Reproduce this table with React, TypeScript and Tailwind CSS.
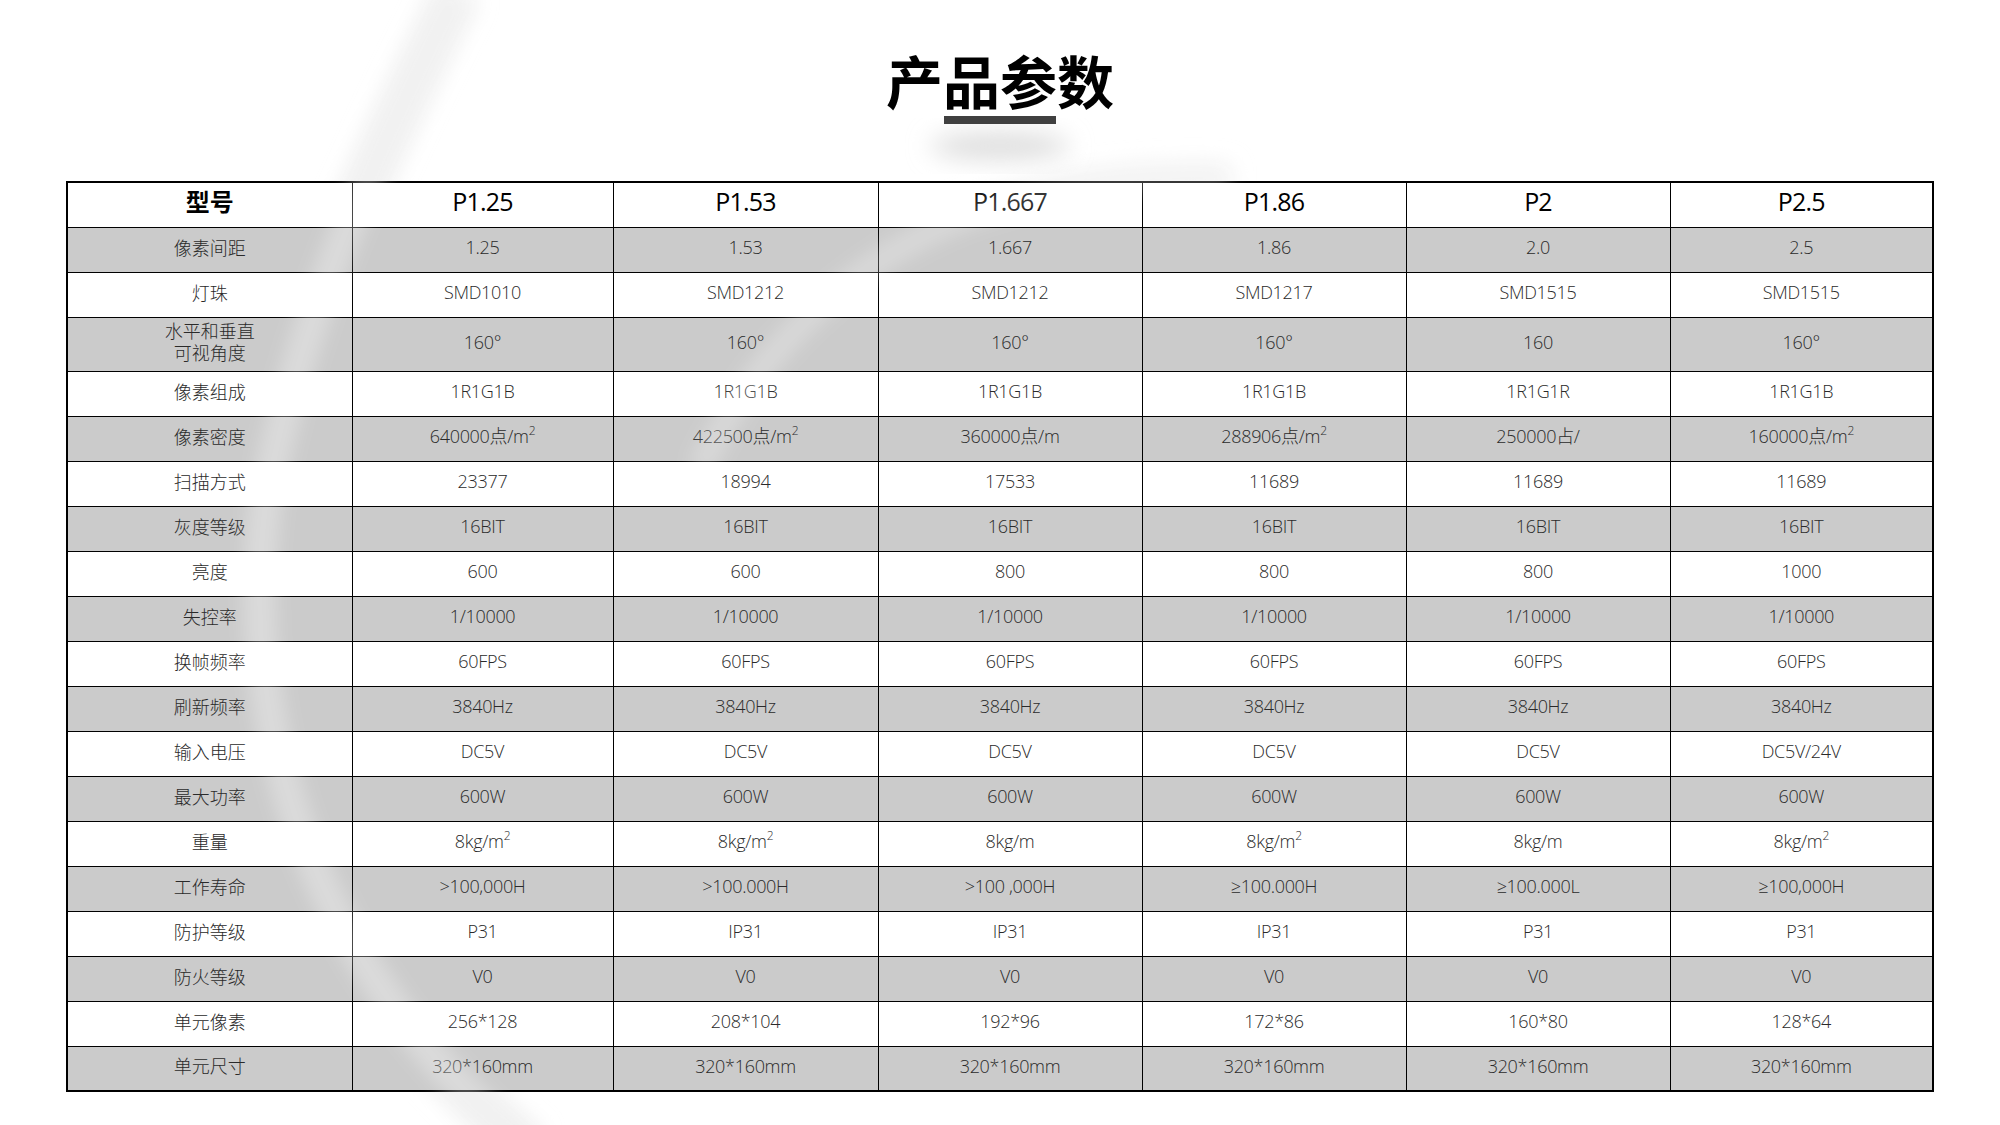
const models = ["P1.25", "P1.53", "P1.667", "P1.86", "P2", "P2.5"];

type Cell = string | { base: string; sup: string };

const sq = (base: string): Cell => ({ base, sup: "2" });

const rows: { label: string[]; values: Cell[]; tall?: boolean }[] = [
  { label: ["像素间距"], values: ["1.25", "1.53", "1.667", "1.86", "2.0", "2.5"] },
  { label: ["灯珠"], values: ["SMD1010", "SMD1212", "SMD1212", "SMD1217", "SMD1515", "SMD1515"] },
  { label: ["水平和垂直", "可视角度"], values: ["160°", "160°", "160°", "160°", "160", "160°"], tall: true },
  { label: ["像素组成"], values: ["1R1G1B", "1R1G1B", "1R1G1B", "1R1G1B", "1R1G1R", "1R1G1B"] },
  {
    label: ["像素密度"],
    values: [sq("640000点/m"), sq("422500点/m"), "360000点/m", sq("288906点/m"), "250000占/", sq("160000点/m")],
  },
  { label: ["扫描方式"], values: ["23377", "18994", "17533", "11689", "11689", "11689"] },
  { label: ["灰度等级"], values: ["16BIT", "16BIT", "16BIT", "16BIT", "16BIT", "16BIT"] },
  { label: ["亮度"], values: ["600", "600", "800", "800", "800", "1000"] },
  { label: ["失控率"], values: ["1/10000", "1/10000", "1/10000", "1/10000", "1/10000", "1/10000"] },
  { label: ["换帧频率"], values: ["60FPS", "60FPS", "60FPS", "60FPS", "60FPS", "60FPS"] },
  { label: ["刷新频率"], values: ["3840Hz", "3840Hz", "3840Hz", "3840Hz", "3840Hz", "3840Hz"] },
  { label: ["输入电压"], values: ["DC5V", "DC5V", "DC5V", "DC5V", "DC5V", "DC5V/24V"] },
  { label: ["最大功率"], values: ["600W", "600W", "600W", "600W", "600W", "600W"] },
  { label: ["重量"], values: [sq("8kg/m"), sq("8kg/m"), "8kg/m", sq("8kg/m"), "8kg/m", sq("8kg/m")] },
  {
    label: ["工作寿命"],
    values: [">100,000H", ">100.000H", ">100 ,000H", "≥100.000H", "≥100.000L", "≥100,000H"],
  },
  { label: ["防护等级"], values: ["P31", "IP31", "IP31", "IP31", "P31", "P31"] },
  { label: ["防火等级"], values: ["V0", "V0", "V0", "V0", "V0", "V0"] },
  { label: ["单元像素"], values: ["256*128", "208*104", "192*96", "172*86", "160*80", "128*64"] },
  { label: ["单元尺寸"], values: ["320*160mm", "320*160mm", "320*160mm", "320*160mm", "320*160mm", "320*160mm"] },
];

const CellText = ({ cell }: { cell: Cell }) =>
  typeof cell === "string" ? (
    <>{cell}</>
  ) : (
    <>
      {cell.base}
      <span className="relative -top-[8px] text-[12px]">{cell.sup}</span>
    </>
  );

const bigArc = "M 458 -10 C 395 120 300 300 266 500 C 240 700 290 950 530 1150";
const smallArc = "M 700 470 C 750 360 850 255 985 210 C 1065 185 1150 176 1230 180";

const App = () => {
  return (
    <div className="relative h-[1125px] w-[2000px] overflow-hidden bg-white font-['Open_Sans','Noto_Sans_CJK_SC',sans-serif]">
      {/* background swooshes */}
      <svg className="absolute inset-0" width="2000" height="1125" viewBox="0 0 2000 1125">
        <defs>
          <filter id="soft" x="-20%" y="-20%" width="140%" height="140%">
            <feGaussianBlur stdDeviation="11" />
          </filter>
          <filter id="softer" x="-50%" y="-50%" width="200%" height="200%">
            <feGaussianBlur stdDeviation="12" />
          </filter>
        </defs>
        <path d={bigArc} stroke="#ebebeb" strokeWidth="42" fill="none" filter="url(#soft)" />
        <path d={smallArc} stroke="#efefef" strokeWidth="30" fill="none" filter="url(#soft)" />
        <ellipse cx="1000" cy="146" rx="70" ry="14" fill="#dedede" filter="url(#softer)" />
      </svg>

      <div className="relative flex flex-col items-center pt-[49px]">
        <h1 className="font-['Noto_Sans_CJK_SC',sans-serif] text-[57px] font-bold leading-[60px] text-black">
          产品参数
        </h1>
        <div className="mt-[7px] h-[8px] w-[112px] bg-[#404040]" />
      </div>

      <table className="relative mx-[66px] mt-[57px] w-[1866px] table-fixed border-collapse border-2 border-black">
        <colgroup>
          <col className="w-[285px]" />
          <col className="w-[261px]" />
          <col className="w-[265px]" />
          <col className="w-[264px]" />
          <col className="w-[264px]" />
          <col className="w-[264px]" />
          <col className="w-[263px]" />
        </colgroup>
        <thead>
          <tr className="h-[45px] bg-white">
            <th className="border border-black p-0 pb-[6px] text-[24px] font-bold text-black">型号</th>
            {models.map((m) => (
              <th
                key={m}
                className="border border-black p-0 pb-[6px] text-[25px] font-normal tracking-[-0.8px] text-black"
              >
                {m}
              </th>
            ))}
          </tr>
        </thead>
        <tbody>
          {rows.map((row, i) => (
            <tr
              key={i}
              className={`${row.tall ? "h-[54px]" : "h-[45px]"} ${i % 2 === 0 ? "bg-[#cbcbcb]" : "bg-white"}`}
            >
              <td className="border border-black p-0 pb-[4px] text-center text-[18px] font-light leading-[22px] text-[#2a2a2a]">
                {row.label.map((l) => (
                  <div key={l}>{l}</div>
                ))}
              </td>
              {row.values.map((v, j) => (
                <td
                  key={j}
                  className="border border-black p-0 pb-[4px] text-center text-[18px] font-light tracking-[-0.3px] text-[#2a2a2a]"
                >
                  <CellText cell={v} />
                </td>
              ))}
            </tr>
          ))}
        </tbody>
      </table>

      {/* faint highlight of the swoosh showing across the table */}
      <svg className="pointer-events-none absolute inset-0" width="2000" height="1125" viewBox="0 0 2000 1125">
        <defs>
          <filter id="glow" x="-20%" y="-20%" width="140%" height="140%">
            <feGaussianBlur stdDeviation="9" />
          </filter>
        </defs>
        <path d={bigArc} stroke="#ffffff" strokeOpacity="0.3" strokeWidth="32" fill="none" filter="url(#glow)" />
        <path d={smallArc} stroke="#ffffff" strokeOpacity="0.25" strokeWidth="26" fill="none" filter="url(#glow)" />
      </svg>
    </div>
  );
};

export default App;
